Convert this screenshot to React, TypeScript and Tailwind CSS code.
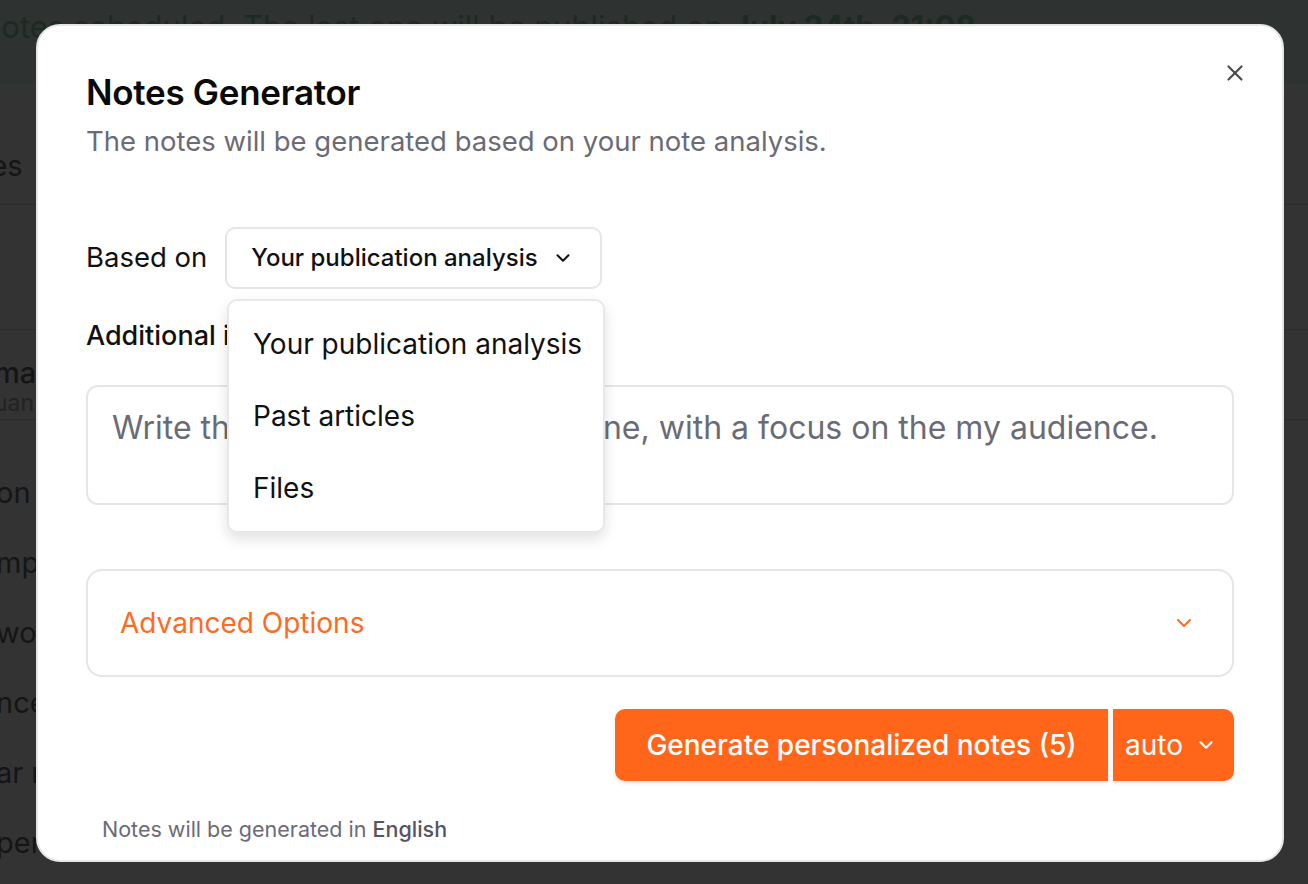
import React from "react";
import { ChevronDown, X } from "lucide-react";

const sideRows = ["on", "mp", "wo", "nce", "ar n", "per"];

const options = ["Your publication analysis", "Past articles", "Files"];

function BackgroundPage() {
	return (
		<div className="h-[884px] w-full overflow-hidden bg-[#333333] font-['Inter',sans-serif]">
			<div className="flex h-[85px] items-start border-b border-[#2a3a30] bg-[#2e3231] pt-[4px]">
				<p className="-ml-[22px] whitespace-nowrap text-[31px] text-[#1c2a22]">
					Notes scheduled. The last one will be published on{" "}
					<span className="font-bold">July 24th, 21:08</span>
				</p>
			</div>
			<div className="flex h-[120px] items-end border-b border-[#2b2b2b] pb-[20px]">
				<span className="-ml-[58px] text-[29px] leading-[36px] text-[#151515]">
					Notes
				</span>
			</div>
			<div className="h-[125px] border-b border-[#2b2b2b]" />
			<div className="flex h-[90px] flex-col border-b border-[#2b2b2b] pt-[26px]">
				<span className="-ml-[6px] text-[29px] font-medium leading-[34px] text-[#151515]">
					ma
				</span>
				<span className="-ml-[6px] text-[23px] leading-[26px] text-[#222]">
					uan
				</span>
			</div>
			<div className="flex flex-col pt-[56px]">
				{sideRows.map((row) => (
					<div key={row} className="flex h-[70px] items-start">
						<span className="-ml-[4px] text-[29px] leading-[34px] text-[#151515]">
							{row}
						</span>
					</div>
				))}
			</div>
		</div>
	);
}

export default function App() {
	return (
		<div className="relative h-[884px] w-[1308px] overflow-hidden font-['Inter',sans-serif]">
			<BackgroundPage />

			{/* Modal */}
			<div className="absolute left-[36px] top-[24px] flex h-[838px] w-[1248px] flex-col rounded-[24px] border-2 border-[#e6e6e6] bg-white px-[48px] pt-[44px]">
				<button className="absolute right-[34px] top-[34px] text-[#4b4b4b]">
					<X className="h-[26px] w-[26px]" strokeWidth={2} />
				</button>

				<h2 className="text-[35px] font-semibold leading-[44px] tracking-[-0.3px] text-[#0a0a0a]">
					Notes Generator
				</h2>
				<p className="mt-[11px] text-[27.5px] leading-[32px] text-[#6b6b76]">
					The notes will be generated based on your note analysis.
				</p>

				<div className="relative mt-[70px] flex h-[62px] items-center gap-[18px]">
					<span className="text-[27.5px] text-[#111]">Based on</span>
					<button className="flex h-[62px] w-[377px] items-center gap-[14px] rounded-[10px] border-2 border-[#e6e6e6] bg-white pl-[24px]">
						<span className="text-[24px] font-medium text-[#111]">
							Your publication analysis
						</span>
						<ChevronDown className="h-[22px] w-[22px] text-[#111]" strokeWidth={2.2} />
					</button>

					{/* Open dropdown */}
					<div className="absolute left-[141px] top-[72px] z-10 flex h-[234px] w-[378px] flex-col justify-center rounded-[10px] border-2 border-[#e8e8e8] bg-white shadow-[0_6px_14px_rgba(0,0,0,0.12)]">
						{options.map((o) => (
							<div
								key={o}
								className="flex h-[72px] items-center pl-[24px] text-[28px] text-[#111]"
							>
								{o}
							</div>
						))}
					</div>
				</div>

				<div className="mt-[31px] text-[27px] font-medium leading-[32px] text-[#111]">
					Additional instructions
				</div>

				<div className="mt-[33px] h-[120px] rounded-[12px] border-2 border-[#e6e6e6] px-[24px] pt-[17px]">
					<span className="whitespace-nowrap text-[32px] text-[#6b6b76]">
						Write the notes in a humorous tone, with a focus on the my audience.
					</span>
				</div>

				<div className="mt-[64px] flex h-[108px] items-center justify-between rounded-[16px] border-2 border-[#e6e6e6] pl-[32px] pr-[36px]">
					<span className="text-[28px] text-[#ff6a1f]">Advanced Options</span>
					<ChevronDown className="h-[24px] w-[24px] text-[#ff6a1f]" strokeWidth={2} />
				</div>

				<div className="mt-[32px] flex justify-end gap-[5px]">
					<button className="flex h-[72px] w-[493px] items-center justify-center rounded-l-[10px] bg-[#ff661a] text-[28px] font-medium text-white shadow-[0_2px_4px_rgba(0,0,0,0.1)]">
						Generate personalized notes (5)
					</button>
					<button className="flex h-[72px] w-[121px] items-center gap-[12px] rounded-r-[10px] bg-[#ff661a] pl-[12px] text-[28px] text-white shadow-[0_2px_4px_rgba(0,0,0,0.1)]">
						auto
						<ChevronDown className="h-[22px] w-[22px]" strokeWidth={2.4} />
					</button>
				</div>

				<p className="mt-[34px] pl-[16px] text-[21.5px] leading-[28px] text-[#6b6b76]">
					Notes will be generated in{" "}
					<span className="font-medium text-[#55555f]">English</span>
				</p>
			</div>
		</div>
	);
}
